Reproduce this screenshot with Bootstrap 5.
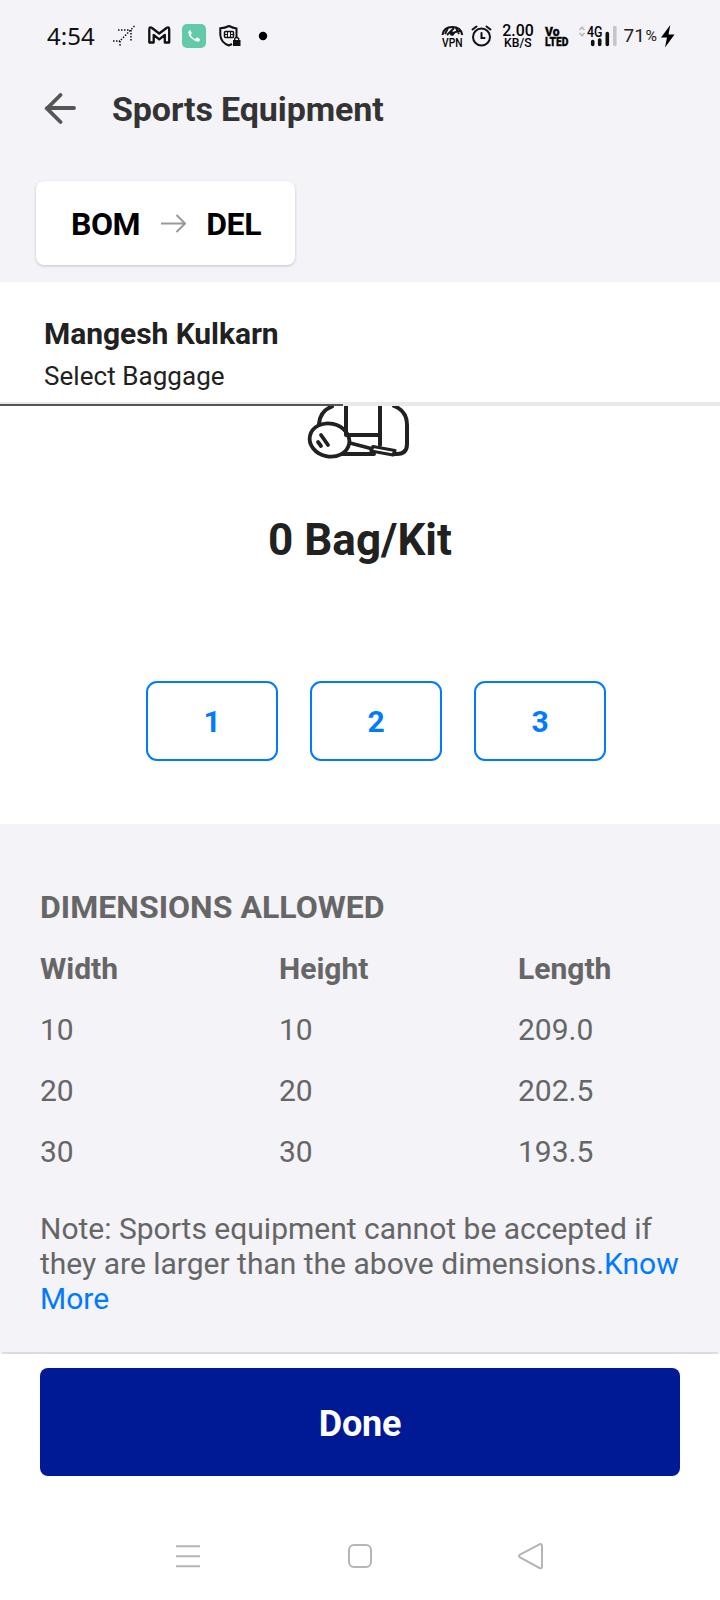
<!DOCTYPE html>
<html lang="en">
<head>
<meta charset="utf-8">
<meta name="viewport" content="width=device-width, initial-scale=1">
<title>Sports Equipment</title>
<link href="https://cdn.jsdelivr.net/npm/bootstrap@5.3.0/dist/css/bootstrap.min.css" rel="stylesheet">
<style>
  body { font-family: Roboto, "Liberation Sans", sans-serif; color: #212121; background: #fff; }
  .screen { width: 720px; height: 1600px; }
  .tint { background: #f3f3f8; }
  .status { height: 72px; padding: 18px 44px 0 46px; }
  .status svg { display: block; flex: none; height: 36px; }
  .clock { font: 24px/36px "Noto Sans", sans-serif; width: 60px; padding-left: 1px; color: #111; }
  .net { font-family: Roboto, sans-serif; }
  .appbar { height: 74px; padding-left: 44px; gap: 36px; }
  .appbar h1 { font-size: 34px; line-height: 40px; letter-spacing: -.12px; color: #333; }
  .route-wrap { height: 136px; padding: 35px 0 0 36px; }
  .route { width: 259px; height: 84px; padding: 2px 0 0 1px; border-radius: 8px; gap: 20px; font-size: 32px; letter-spacing: -.4px; color: #000; box-shadow: 0 1px 3px rgba(0,0,0,.2); }
  .pax { height: 120px; padding: 34px 44px 0; }
  .pax h2 { font-size: 30px; line-height: 36px; letter-spacing: -.06px; }
  .pax p { font-size: 26px; line-height: 32px; margin-top: 8px; letter-spacing: .05px; }
  .track { height: 4px; background: #e9e9e9; }
  .track div { width: 343px; height: 2px; background: #555; }
  .picker { height: 418px; }
  .kit { font-size: 44px; line-height: 52px; margin-top: 54px; }
  .qty { gap: 32px; margin-top: 115px; padding-left: 146px; }
  .qty .btn { width: 132px; height: 80px; border: 2px solid #007aff; border-radius: 11px; color: #007aff; font-size: 30px; padding: 0; }
  .dims { height: 528px; padding: 63px 40px 0; color: #666; font-size: 30px; }
  .dims h3 { font-size: 32px; line-height: 40px; letter-spacing: .03px; }
  .dims .grid3 { display: grid; grid-template-columns: 239px 239px 1fr; grid-auto-rows: 61px; line-height: 61px; margin-top: 11px; }
  .note { line-height: 35px; margin: 29px -10px 0 0; }
  .note a { color: #007aff; }
  .foot { height: 148px; padding: 14px 40px 0; }
  .edge { height: 2px; margin: 0 2px; background: #dcdce0; }
  .foot .btn { height: 108px; padding: 4px 0 0; border: 0; border-radius: 8px; background: #001994; color: #fff; font-size: 36px; letter-spacing: -.2px; }
  .sysnav { height: 98px; }
</style>
</head>
<body>
<main class="screen overflow-hidden">
  <div class="tint">
    <div class="status d-flex justify-content-between">
      <div class="d-flex">
        <span class="clock">4:54</span>
        <svg width="36" viewBox="106 18 36 36"><g fill="none" stroke="#111" stroke-width="1.500" stroke-dasharray="1.5 1.5"><path d="M134.500 26L119 42M118 30H130M131 30V42M113 41H120M120 41V47"/></g></svg>
        <svg width="36" viewBox="142 18 36 36"><path d="M149.300 42.500V29.500Q149.300 26.500 152 28L159.200 33.500L166.500 28Q169.200 26.500 169.200 29.500V42.500H164.800V35L159.200 39.300L153.700 35V42.500Z" fill="none" stroke="#111" stroke-width="2.300" stroke-linejoin="round"/></svg>
        <svg width="36" viewBox="178 18 36 36"><rect x="182" y="24" width="24" height="24" rx="5" fill="#62caa8"/><path d="M189 32Q190 39.500 199 41" fill="none" stroke="#fff" stroke-width="1.700"/><path d="M188.500 31.500Q189.500 29.500 190.800 31L191.800 33.500L189.500 35.500ZM195 39L197.200 37.200L199.800 39Q200.500 41 198.500 41.500Z" fill="#fff"/></svg>
        <svg width="36" viewBox="214 18 36 36"><path d="M236.500 38V28.500Q233 28 229 26Q225 28 220.300 28.300V35Q221 43 229 45.500L232 44" fill="none" stroke="#111" stroke-width="2"/><rect x="224.500" y="31.500" width="9" height="6" rx="1" fill="none" stroke="#111" stroke-width="1.500"/><path d="M227.500 31V38M230.500 31V38M224 34.500H227M231 34.500H234" stroke="#111"/><rect x="233" y="40" width="7.500" height="6" fill="#111"/><path d="M234.700 40V38.500Q236.700 36.500 238.700 38.500V40" fill="none" stroke="#111" stroke-width="1.300"/></svg>
        <svg width="20" viewBox="250 18 20 36"><circle cx="263" cy="36" r="4.200" fill="#000"/></svg>
      </div>
      <div class="d-flex net">
        <svg width="30" viewBox="438 18 30 36"><path d="M442.500 35Q443.500 27 452.300 27Q461 27 462.300 35" fill="none" stroke="#111" stroke-width="2"/><path d="M448 28L445 34M447 35L454 28M452 35L455 32L461 31M456 28L459 34" stroke="#111" stroke-width="1.800" fill="none"/><circle cx="452" cy="33.500" r="2.200" fill="#111"/><text x="442" y="46.700" font-size="13.500" font-weight="500" textLength="20.500" lengthAdjust="spacingAndGlyphs">VPN</text></svg>
        <svg width="28" viewBox="468 18 28 36"><g fill="none" stroke="#111" stroke-width="2" stroke-linecap="round"><circle cx="481.500" cy="37" r="8.500"/><path d="M481.500 33V38H484.500M472.500 29.500L476.500 26.500M490.500 29.500L486.500 26.500"/></g></svg>
        <svg width="44" viewBox="496 18 44 36"><text x="502.300" y="36" font-size="16" font-weight="500" textLength="31.500" lengthAdjust="spacingAndGlyphs">2.00</text><text x="504" y="47" font-size="12" font-weight="500" textLength="27.500" lengthAdjust="spacingAndGlyphs">KB/S</text></svg>
        <svg width="34" viewBox="540 18 34 36"><g font-weight="900" stroke="#111" stroke-width=".3"><text x="545" y="35.500" font-size="12.500" textLength="14.500" lengthAdjust="spacingAndGlyphs">Vo</text><text x="545" y="46" font-size="13" textLength="23.500" lengthAdjust="spacingAndGlyphs">LTED</text></g></svg>
        <svg width="46" viewBox="574 18 46 36"><path d="M579.500 30L582 27.300L584.500 30M579.500 33L582 35.700L584.500 33" fill="none" stroke="#bbb" stroke-width="1.700"/><text x="587" y="36.700" font-size="14" font-weight="500" textLength="15.500" lengthAdjust="spacingAndGlyphs">4G</text><path d="M592.700 41.500V44.500M599.700 40V44.500M607.300 33.500V44.500" stroke="#111" stroke-width="3.600" stroke-linecap="round"/><path d="M614.800 27.500V44.500" stroke="#c6c6ca" stroke-width="3.600" stroke-linecap="round"/></svg>
        <svg width="38" viewBox="620 18 38 36" fill="#222"><text x="623.500" y="42" font-size="19" textLength="21.500">71</text><text x="645.500" y="41" font-size="15.500" textLength="11.500" lengthAdjust="spacingAndGlyphs">%</text></svg>
        <svg width="18" viewBox="658 18 18 36"><path d="M670.300 25L661 37.500H667L665 47.500L674.500 34.500H668.500Z" fill="#000"/></svg>
      </div>
    </div>
    <div class="appbar d-flex align-items-center">
      <svg width="32" height="32" viewBox="0 0 32 32" fill="none" stroke="#555" stroke-width="3.800" stroke-linecap="round"><path d="M30 15H3M16.500 2L3 15.500L16.500 29"/></svg>
      <h1 class="fw-bold m-0">Sports Equipment</h1>
    </div>
    <div class="route-wrap">
      <div class="route bg-white fw-bold d-flex align-items-center justify-content-center">
        <span>BOM</span>
        <svg width="26" height="20" viewBox="0 0 26 20" fill="none" stroke="#999" stroke-width="2"><path d="M1 9.500H25M16.500 1L25 9.500L16.500 18"/></svg>
        <span>DEL</span>
      </div>
    </div>
  </div>
  <header class="pax">
    <h2 class="fw-bold m-0">Mangesh Kulkarn</h2>
    <p class="mb-0">Select Baggage</p>
  </header>
  <div class="track d-flex align-items-end"><div></div></div>
  <section class="picker">
    <svg class="d-block mx-auto" width="108" height="54" viewBox="306 406 108 54" fill="none" stroke="#212121" stroke-width="4" stroke-linecap="round" stroke-linejoin="round">
      <path d="M319 424Q320 411 332 406.500M346 402V435H380M380 402V445M394 406Q407 411 407 425V444Q407 454 397 454H392M342 454H374"/>
      <ellipse cx="329.500" cy="440" rx="20" ry="16.500" transform="rotate(12 329.500 440)" stroke-width="3.800"/>
      <path d="M321 435L328 445M318 442L321 446" stroke-width="3.800"/>
      <path d="M350 443L371 448.500" stroke-width="3.500"/>
      <path d="M373 446.500L395 450.500L393 455L371 451Z" stroke-width="3.200" fill="#fff"/>
    </svg>
    <div class="kit fw-bold text-center">0 Bag/Kit</div>
    <div class="qty d-flex">
      <button class="btn fw-bold">1</button>
      <button class="btn fw-bold">2</button>
      <button class="btn fw-bold">3</button>
    </div>
  </section>
  <section class="dims tint">
    <h3 class="fw-bold m-0">DIMENSIONS ALLOWED</h3>
    <div class="grid3">
      <b>Width</b><b>Height</b><b>Length</b>
      <span>10</span><span>10</span><span>209.0</span>
      <span>20</span><span>20</span><span>202.5</span>
      <span>30</span><span>30</span><span>193.5</span>
    </div>
    <p class="note">Note: Sports equipment cannot be accepted if<br>they are larger than the above dimensions.<a class="text-decoration-none" href="#">Know<br>More</a></p>
  </section>
  <div class="tint"><div class="edge"></div></div>
  <footer class="foot">
    <button class="btn w-100 fw-bold">Done</button>
  </footer>
  <nav class="sysnav">
    <svg class="d-block" width="720" height="98" viewBox="0 1502 720 98" fill="none" stroke="#b5b5b5" stroke-width="2"><path d="M176 1546.300H200M176 1556.300H200M176 1566.300H200"/><rect x="349" y="1545" width="22" height="22" rx="5"/><path d="M539.500 1544.300L520 1554.700Q518 1556 520 1557.500L539.500 1568Q542 1569 542 1566.500V1546Q542 1543.500 539.500 1544.300Z"/></svg>
  </nav>
</main>
<script src="https://cdn.jsdelivr.net/npm/bootstrap@5.3.0/dist/js/bootstrap.bundle.min.js"></script>
</body>
</html>
